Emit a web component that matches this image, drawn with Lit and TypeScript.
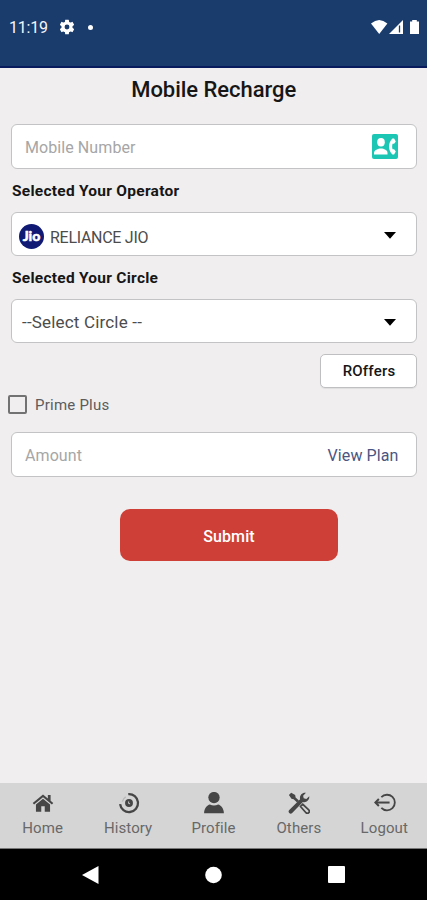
import { LitElement, html, svg, css } from "lit";
import { customElement } from "lit/decorators.js";

const homeIcon = svg`<path d="M12 2.800.8 11.900l1.500 1.800L12 5.800l9.700 7.900 1.500-1.800L20.300 9.600V3.200h-3V7.200z"/><path d="M12 7.300 4.300 13.500V21.500h5.800v-6h3.800v6h5.800v-8z"/>`;
const historyIcon = svg`<path d="M11.200 2.300A9.800 9.800 0 1 1 2.300 13.200" fill="none" stroke="currentColor" stroke-width="2.500"/><path d="M4.800 10.500A7.500 7.500 0 0 1 8.500 5.400" fill="none" stroke="currentColor" stroke-width="1.500" opacity=".2"/><circle cx="12" cy="12" r="4.300"/><path d="M11.600 10.300v2.200l1.600.4" fill="none" stroke="#d5d5d5" stroke-width="1"/>`;
const profileIcon = svg`<circle cx="12" cy="6.100" r="6.200"/><path d="M1.200 23.300c0-5.800 3.300-9.100 6.300-9.800 2.700 1.500 6.300 1.500 9 0 3 .7 6.300 4 6.300 9.800z"/>`;
const toolsIcon = svg`<path d="M1 3.200 3.500.9l4.300 2.500.5 2.500 3.600 3.500-2 2-3.700-3.600-2.400-.5z"/><path d="m13.700 15.800 2.400-2.400 6.500 6.200a2 2 0 0 1-3 3z" fill="none" stroke="currentColor" stroke-width="1.900"/><path d="m1.100 20 12.100-12c-.9-4 2-7.900 6.400-7.200l-3.100 3.200.6 2.900 2.900.6 3.200-3c.5 4.500-3.200 7.400-7 6.400L4.300 23.200a2.300 2.300 0 0 1-3.200-3.200z"/>`;
const logoutIcon = svg`<g fill="none" stroke="currentColor" stroke-width="2"><path d="M8 5.700A8.500 8.500 0 1 1 8 17.300"/><path d="M2 11.500h15" stroke-width="2.200"/><path d="M5.300 7.700 1.500 11.500l3.800 3.800" stroke-width="2.200"/></g>`;

const tabs = [
  { name: "Home", icon: homeIcon },
  { name: "History", icon: historyIcon },
  { name: "Profile", icon: profileIcon },
  { name: "Others", icon: toolsIcon },
  { name: "Logout", icon: logoutIcon },
];

@customElement("app-root")
export class AppRoot extends LitElement {
  static styles = css`
    :host {
      display: flex;
      flex-direction: column;
      height: 900px;
      overflow: hidden;
      background: #f0eeef;
      font-family: Roboto, "Liberation Sans", sans-serif;
      color: #161616;
    }
    * { box-sizing: border-box; }
    svg { display: block; }
    .status {
      height: 68px;
      flex: none;
      display: flex;
      align-items: flex-start;
      padding: 19px 7px 0 9px;
      background: #193c6d;
      border-bottom: 2px solid #071b5d;
      color: #f4f6fa;
    }
    .time { width: 51px; font-size: 16px; line-height: 18px; letter-spacing: -0.2px; }
    .dot { width: 5px; height: 5px; margin: 6px 0 0 14px; border-radius: 50%; background: #fff; }
    .signals { margin-left: auto; }
    main { flex: 1; padding: 0 10.500px 0 11px; display: flex; flex-direction: column; }
    h1 { margin: 8px 0 0; height: 28px; line-height: 28px; font-size: 22px; font-weight: 500; text-align: center; letter-spacing: -0.03px; }
    .field {
      height: 45px;
      flex: none;
      display: flex;
      align-items: center;
      justify-content: space-between;
      border: 1px solid #c3c2c4;
      border-radius: 6px;
      background: #fff;
      padding: 1px 18px 0 13px;
      font-size: 16px;
    }
    .number { margin-top: 20px; }
    .contact { margin-top: -2px; }
    .hint { color: #a6a6a6; letter-spacing: 0.08px; }
    .label { height: 43px; line-height: 45px; font-size: 15.500px; font-weight: 700; color: #161616; padding-left: 1px; letter-spacing: 0.26px; }
    .select { height: 44px; padding: 3px 20px 0 10px; color: #4c4c4c; }
    .operator { padding-left: 7px; }
    .operator .chosen { display: flex; align-items: center; gap: 6px; }
    .operator-name { letter-spacing: -0.28px; padding-top: 3px; }
    .circle-name { font-size: 17px; letter-spacing: 0.18px; padding-bottom: 2px; }
    .offers {
      width: 97px;
      height: 34px;
      margin: 11px 0 0;
      align-self: flex-end;
      border: 1px solid #bfbfc1;
      border-radius: 5px;
      background: #fff;
      box-shadow: 0 1px 1px #0001;
      font-size: 15px;
      font-weight: 500;
      line-height: 33px;
      letter-spacing: 0.2px;
      padding-left: 2px;
      text-align: center;
    }
    .prime { display: flex; align-items: center; gap: 8px; margin: 6px 0 0 -3px; height: 21px; font-size: 15px; color: #5c5c5c; letter-spacing: 0.23px; }
    .box { width: 19px; height: 19px; border: 2px solid #737273; border-radius: 2px; }
    .amount { margin-top: 17px; }
    .plan { color: #4b5582; letter-spacing: 0.1px; margin-right: -1px; }
    .submit {
      width: 218px;
      height: 52px;
      margin: 32px 0 0 109px;
      border-radius: 10px;
      background: #ce3f37;
      color: #fff;
      font-size: 16px;
      font-weight: 500;
      line-height: 55px;
      letter-spacing: 0.1px;
      text-align: center;
    }
    .tabs { height: 66px; flex: none; display: grid; grid-template-columns: repeat(5, 1fr); background: #d5d5d5; border-bottom: 1px solid #777; color: #464646; }
    .tab { display: flex; flex-direction: column; align-items: center; padding-top: 9px; gap: 3px; font-size: 15px; line-height: 22px; letter-spacing: 0.1px; }
    .tab svg { margin-left: 1px; }
    .tab span { color: #686868; }
    .system { height: 51px; flex: none; display: grid; grid-template-columns: 1fr 1fr 1fr; align-items: center; justify-items: center; padding: 0 29px; background: #000; }
  `;

  private arrow() {
    return html`<svg width="12" height="7" viewBox="0 0 12 7"><path d="M0 0h12L6 6.800z" fill="#000"/></svg>`;
  }

  render() {
    return html`
      <header class="status">
        <span class="time">11:19</span>
        <svg width="14" height="16" viewBox="2.500 2 19 20" fill="#fff"><path d="M19.430 12.980c.04-.32.070-.64.070-.98s-.03-.66-.070-.98l2.110-1.650c.19-.15.24-.42.120-.64l-2-3.460c-.12-.22-.39-.3-.61-.22l-2.490 1c-.52-.4-1.080-.73-1.690-.98l-.38-2.650A.49.49 0 0 0 14 2h-4c-.25 0-.46.180-.49.420l-.38 2.650c-.61.250-1.170.590-1.690.98l-2.490-1c-.23-.09-.49 0-.61.220l-2 3.460c-.13.220-.07.490.120.640l2.110 1.650c-.04.320-.07.650-.07.980s.03.660.070.980l-2.110 1.650c-.19.150-.24.420-.12.640l2 3.460c.12.220.390.300.610.220l2.490-1c.52.400 1.080.730 1.690.980l.38 2.650c.03.240.240.420.490.420h4c.25 0 .46-.18.490-.42l.38-2.650c.61-.25 1.170-.59 1.690-.98l2.490 1c.23.090.490 0 .61-.22l2-3.460c.12-.22.070-.49-.12-.64zM12 15.300a3.300 3.300 0 1 1 0-6.600 3.300 3.300 0 0 1 0 6.600z"/></svg>
        <i class="dot"></i>
        <svg class="signals" width="49" height="16" viewBox="0 0 49 16" fill="#fff"><path d="M0 4.500Q8.200-2.500 16.400 4.500L8.200 15z"/><path d="M32 1v14H18z"/><path d="M28.500 6.500v7" stroke="#193c6d" stroke-width="1.300"/><path d="M39 2.500h2.200V1h4.600v1.500H48V15h-9z"/></svg>
      </header>
      <main>
        <h1>Mobile Recharge</h1>
        <div class="field number">
          <span class="hint">Mobile Number</span>
          <svg class="contact" width="26" height="25" viewBox="0 0 26 25"><rect width="26" height="25" rx="2" fill="#1bc6b4"/><g fill="#fff"><ellipse cx="9" cy="8.300" rx="3.800" ry="4.200"/><path d="M2 20.500v-1.500c0-3 4-4.600 7-4.600s6.500 1.600 6.500 4.600v1.500z"/><path d="M20.400 4.500h1.700l1.700 3.100-1.700 2.100h-1.500c-.6 1.700-.6 3.800 0 5.600h1.500l1.700 2.200-1.700 3h-1.700c-4.500-4.600-4.500-11.400 0-16z"/></g></svg>
        </div>
        <div class="label">Selected Your Operator</div>
        <div class="field select operator">
          <span class="chosen">
            <svg width="25" height="26" viewBox="0 0 25 26"><circle cx="12.500" cy="13.500" r="12.500" fill="#101a75"/><text x="12.500" y="18" text-anchor="middle" font-family="Lato, sans-serif" font-weight="900" font-size="14" fill="#fff" stroke="#fff" stroke-width=".5">Jio</text></svg>
            <span class="operator-name">RELIANCE JIO</span>
          </span>
          ${this.arrow()}
        </div>
        <div class="label">Selected Your Circle</div>
        <div class="field select"><span class="circle-name">--Select Circle --</span>${this.arrow()}</div>
        <div class="offers">ROffers</div>
        <div class="prime"><span class="box"></span><span>Prime Plus</span></div>
        <div class="field amount"><span class="hint">Amount</span><span class="plan">View Plan</span></div>
        <div class="submit">Submit</div>
      </main>
      <nav class="tabs">
        ${tabs.map((t) => html`<div class="tab"><svg width="22" height="22" viewBox="0 0 24 24" fill="currentColor">${t.icon}</svg><span>${t.name}</span></div>`)}
      </nav>
      <footer class="system">
        <svg width="17" height="20" viewBox="0 0 17 20"><path d="M0 10 16.500 1v18z" fill="#fff"/></svg>
        <svg width="17" height="18" viewBox="0 0 17 18"><circle cx="8.500" cy="9" r="8.300" fill="#fff"/></svg>
        <svg width="17" height="17" viewBox="0 0 17 17"><rect width="17" height="17" rx="1" fill="#fff"/></svg>
      </footer>
    `;
  }
}
